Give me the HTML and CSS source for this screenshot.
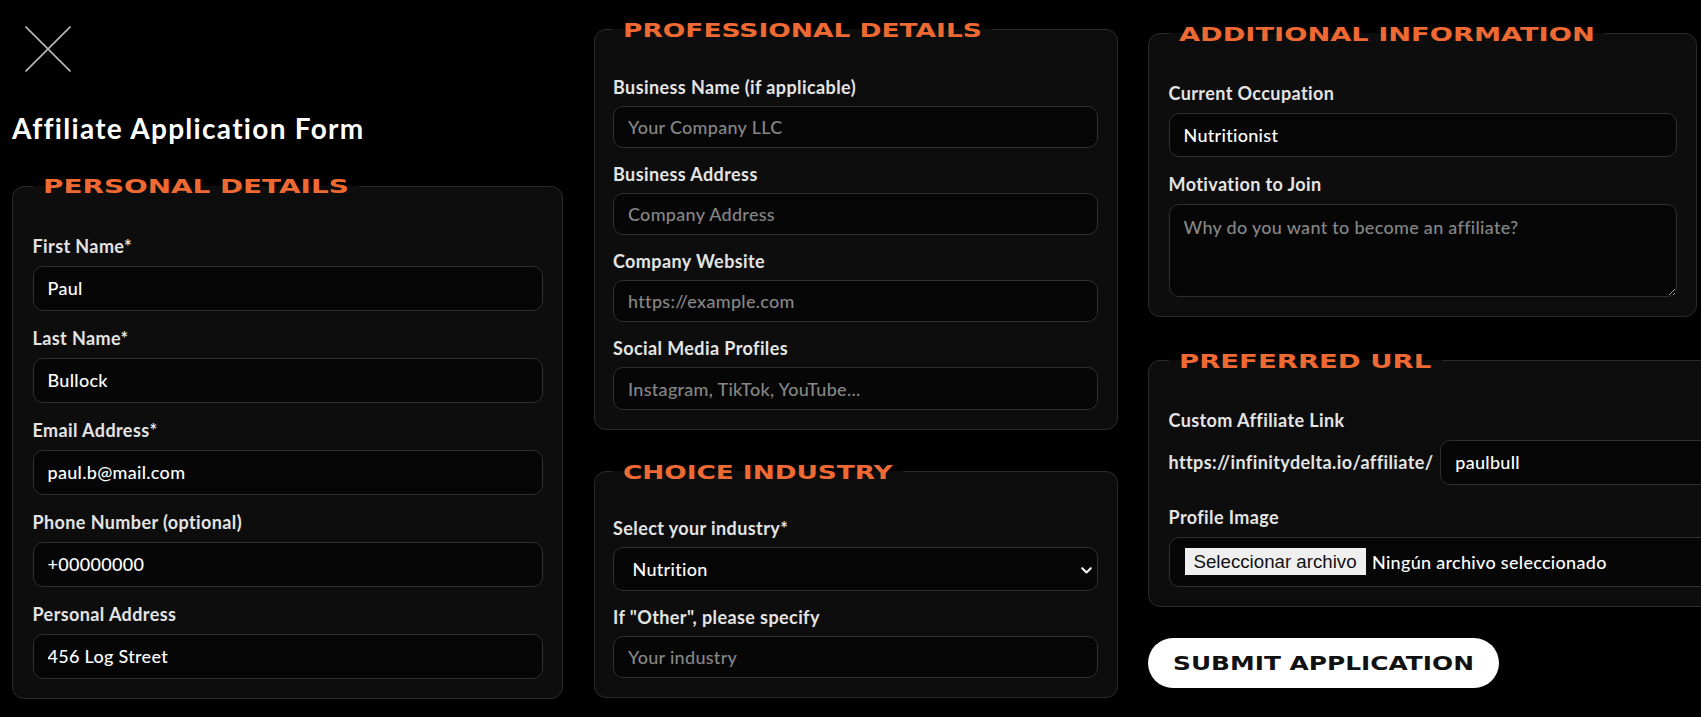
FILE: index.html
```html
<!DOCTYPE html>
<html lang="en">
<head>
<meta charset="utf-8">
<title>Affiliate Application Form</title>
<link rel="stylesheet" href="styles.css">
</head>
<body>
<main class="page">
  <section class="col col-1">
    <button class="close" type="button" aria-label="Close">
      <svg width="46" height="46" viewBox="0 0 46 46"><line x1="0.5" y1="0.5" x2="45.5" y2="45.5"/><line x1="45.5" y1="0.5" x2="0.5" y2="45.5"/></svg>
    </button>
    <h1 class="title">Affiliate Application Form</h1>
    <fieldset class="fs fs-personal">
      <legend class="legend"><svg width="306" height="20" viewBox="0 0 306 20"><text class="legend-text" x="0" y="17.3" textLength="305.7" lengthAdjust="spacingAndGlyphs">PERSONAL DETAILS</text></svg></legend>
      <div class="field"><label class="label" for="fn">First Name*</label><input id="fn" class="input" type="text" value="Paul"></div>
      <div class="field"><label class="label" for="ln">Last Name*</label><input id="ln" class="input" type="text" value="Bullock"></div>
      <div class="field"><label class="label" for="em">Email Address*</label><input id="em" class="input" type="email" value="paul.b@mail.com"></div>
      <div class="field"><label class="label" for="ph">Phone Number (optional)</label><input id="ph" class="input" type="tel" value="+00000000"></div>
      <div class="field"><label class="label" for="pa">Personal Address</label><input id="pa" class="input" type="text" value="456 Log Street"></div>
    </fieldset>
  </section>

  <section class="col col-2">
    <fieldset class="fs fs-narrow">
      <legend class="legend"><svg width="359" height="20" viewBox="0 0 359 20"><text class="legend-text" x="0" y="17.3" textLength="358.9" lengthAdjust="spacingAndGlyphs">PROFESSIONAL DETAILS</text></svg></legend>
      <div class="field"><label class="label" for="bn">Business Name (if applicable)</label><input id="bn" class="input" type="text" placeholder="Your Company LLC"></div>
      <div class="field"><label class="label" for="ba">Business Address</label><input id="ba" class="input" type="text" placeholder="Company Address"></div>
      <div class="field"><label class="label" for="cw">Company Website</label><input id="cw" class="input" type="url" placeholder="https://example.com"></div>
      <div class="field"><label class="label" for="sm">Social Media Profiles</label><input id="sm" class="input" type="text" placeholder="Instagram, TikTok, YouTube..."></div>
    </fieldset>
    <fieldset class="fs fs-narrow fs-industry">
      <legend class="legend"><svg width="270" height="20" viewBox="0 0 270 20"><text class="legend-text" x="0" y="17.3" textLength="269.6" lengthAdjust="spacingAndGlyphs">CHOICE INDUSTRY</text></svg></legend>
      <div class="field">
        <label class="label" for="ind">Select your industry*</label>
        <div class="select-wrap">
          <select id="ind" class="select">
            <option>Nutrition</option>
            <option>Fitness</option>
            <option>Wellness</option>
            <option>Other</option>
          </select>
          <svg class="chevron" width="11" height="7" viewBox="0 0 11 7"><path d="M1.2 1.2 L5.5 5.5 L9.8 1.2"/></svg>
        </div>
      </div>
      <div class="field"><label class="label" for="oth">If "Other", please specify</label><input id="oth" class="input" type="text" placeholder="Your industry"></div>
    </fieldset>
  </section>

  <section class="col col-3">
    <fieldset class="fs fs-info">
      <legend class="legend"><svg width="416" height="20" viewBox="0 0 416 20"><text class="legend-text" x="0" y="17.3" textLength="415.7" lengthAdjust="spacingAndGlyphs">ADDITIONAL INFORMATION</text></svg></legend>
      <div class="field"><label class="label" for="occ">Current Occupation</label><input id="occ" class="input" type="text" value="Nutritionist"></div>
      <div class="field"><label class="label" for="mot">Motivation to Join</label><textarea id="mot" class="textarea" placeholder="Why do you want to become an affiliate?"></textarea></div>
    </fieldset>
    <fieldset class="fs fs-url">
      <legend class="legend"><svg width="253" height="20" viewBox="0 0 253 20"><text class="legend-text" x="0" y="17.3" textLength="252.3" lengthAdjust="spacingAndGlyphs">PREFERRED URL</text></svg></legend>
      <div class="field">
        <label class="label" for="slug">Custom Affiliate Link</label>
        <div class="url-row">
          <span class="url-prefix">https://infinitydelta.io/affiliate/</span>
          <input id="slug" class="input url-input" type="text" value="paulbull">
        </div>
      </div>
      <div class="field field-file">
        <span class="label">Profile Image</span>
        <label class="file-box">
          <input class="file-native" type="file" accept="image/*">
          <span class="file-btn">Seleccionar archivo</span>
          <span class="file-name">Ningún archivo seleccionado</span>
        </label>
      </div>
    </fieldset>
    <button class="submit" type="submit"><svg width="301" height="20" viewBox="0 0 301 20"><text class="submit-text" x="0" y="17.3" textLength="301" lengthAdjust="spacingAndGlyphs">SUBMIT APPLICATION</text></svg></button>
  </section>
</main>
</body>
</html>
```

FILE: styles.css
```css
* {
  box-sizing: border-box;
}

html,
body {
  margin: 0;
  background: #000;
}

body {
  overflow-x: hidden;
  font-family: Lato, "Noto Sans", sans-serif;
  color: #e4e4e4;
}

.page {
  display: grid;
  grid-template-columns: 551px 524px 549px;
  column-gap: 30.5px;
  align-items: start;
  padding-left: 12px;
}

.col-2 {
  padding-top: 19.9px;
}

.col-3 {
  padding-top: 23.5px;
}

/* close icon */
.close {
  display: block;
  width: 46px;
  height: 46px;
  margin: 26.3px 0 0 13.3px;
  padding: 0;
  border: 0;
  background: none;
  cursor: pointer;
}

.close svg {
  display: block;
  stroke: #b9b9b9;
  stroke-width: 1.6;
}

.title {
  margin: 40px 0 32px;
  font-family: Lato, "Noto Sans", sans-serif;
  font-weight: 700;
  font-size: 28px;
  line-height: 32px;
  letter-spacing: 1.3px;
  color: #fff;
}

/* fieldsets */
.fs {
  margin: 0;
  min-width: 0;
  border: 1px solid #2a2a2a;
  border-radius: 12px;
  background: #0d0d0d;
  padding: 39.5px 19.5px 19px;
}

.legend {
  padding: 0 10px;
}

.legend svg,
.submit svg {
  display: block;
  overflow: visible;
}

.legend-text {
  font-family: "DejaVu Sans", sans-serif;
  font-weight: 700;
  font-size: 20.2px;
  fill: #ef6a33;
}

.field + .field {
  margin-top: 17px;
}

.label {
  display: block;
  margin-bottom: 10px;
  font-weight: 700;
  font-size: 18px;
  line-height: 20px;
  letter-spacing: 0.4px;
  color: #e4e4e4;
}

.input,
.select,
.textarea {
  display: block;
  width: 100%;
  height: 45px;
  padding: 0 14px;
  border: 1px solid #2f2f2f;
  border-radius: 10px;
  background: #060606;
  color: #fff;
  font-family: Lato, "Noto Sans", sans-serif;
  font-weight: 500;
  font-size: 18px;
  letter-spacing: 0.3px;
  outline: none;
}

.input::placeholder,
.textarea::placeholder {
  color: #868686;
}

/* column 2 is slightly tighter */
.fs-narrow {
  padding: 36.7px 18.5px 19px;
}

.fs-narrow .label {
  margin-bottom: 9px;
}

.fs-narrow .field + .field {
  margin-top: 16px;
}

.fs-narrow .input {
  height: 42.3px;
}

.fs-industry {
  margin-top: 32px;
  padding-top: 36px;
}

.select-wrap {
  position: relative;
}

.select {
  height: 44px;
  padding-left: 18.5px;
  appearance: none;
  -webkit-appearance: none;
}

.chevron {
  position: absolute;
  right: 5.6px;
  top: 20.6px;
  fill: none;
  stroke: #fff;
  stroke-width: 2;
  stroke-linecap: round;
  stroke-linejoin: round;
  pointer-events: none;
}

/* column 3 */
.fs-info {
  padding-top: 39.4px;
}

.fs-info .input {
  height: 44px;
}

.textarea {
  height: 92.7px;
  padding: 12px 14px;
  line-height: 20px;
  resize: vertical;
  color-scheme: dark;
}

.fs-url {
  width: 823px;
  margin-top: 34px;
  padding-top: 39px;
}

.url-row {
  display: flex;
  align-items: center;
  gap: 6.7px;
}

.url-prefix {
  flex: none;
  font-weight: 700;
  font-size: 18px;
  line-height: 20px;
  letter-spacing: 0.4px;
  color: #e4e4e4;
}

.url-input {
  flex: 1;
  min-width: 0;
}

.field + .field-file {
  margin-top: 22.7px;
}

.field-file .label {
  margin-bottom: 9.4px;
}

.file-box {
  display: flex;
  align-items: center;
  height: 50px;
  padding: 0 15px;
  border: 1px solid #2f2f2f;
  border-radius: 10px;
  background: #060606;
  cursor: pointer;
}

.file-native {
  display: none;
}

.file-btn {
  flex: none;
  height: 27.4px;
  padding: 0 9px;
  margin-right: 6.4px;
  background: #efefef;
  color: #111;
  font-family: "Liberation Sans", Arial, sans-serif;
  font-size: 18.7px;
  line-height: 27.4px;
}

.file-name {
  font-weight: 500;
  font-size: 18px;
  letter-spacing: 0.3px;
  color: #fff;
}

/* submit */
.submit {
  display: flex;
  align-items: center;
  height: 50px;
  margin-top: 31.6px;
  padding: 0 25px;
  border: 0;
  border-radius: 25px;
  background: #fff;
  cursor: pointer;
}

.submit-text {
  font-family: "DejaVu Sans", sans-serif;
  font-weight: 700;
  font-size: 20.2px;
  fill: #111;
}
```
